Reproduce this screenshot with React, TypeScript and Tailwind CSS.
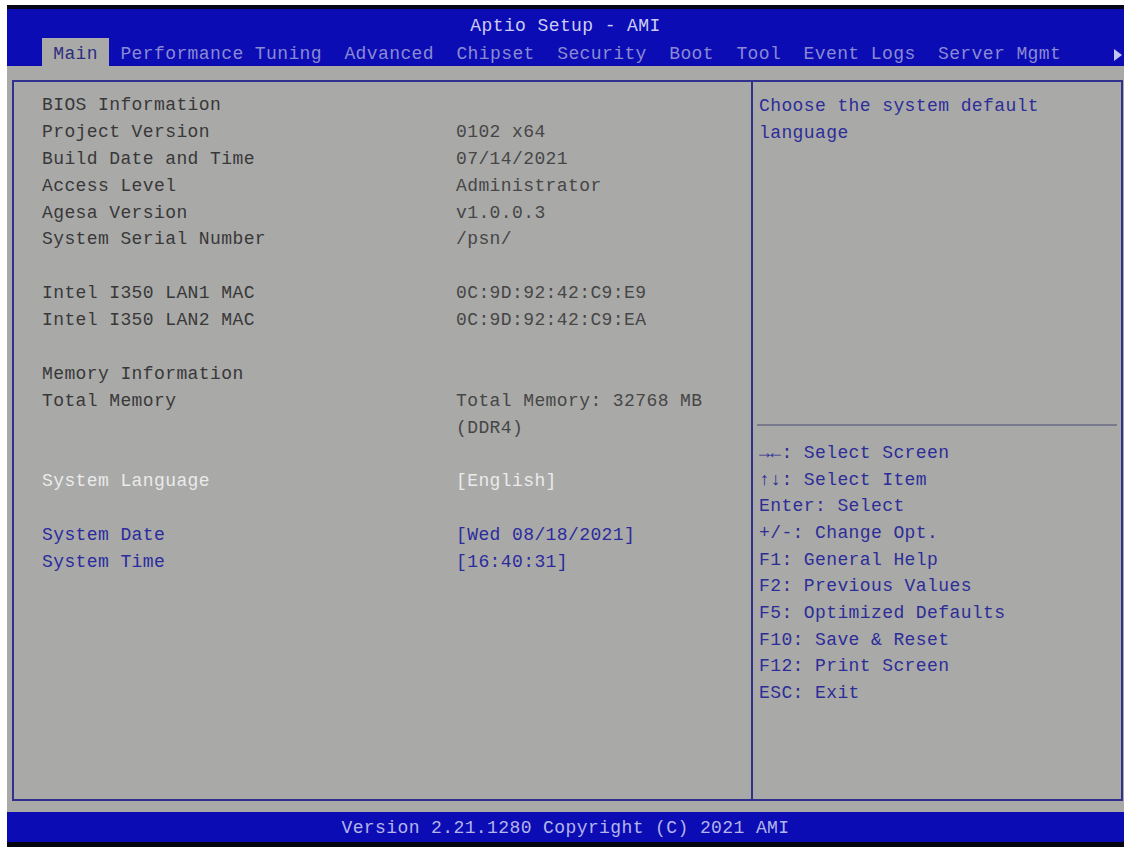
const tabs = [
  "Main",
  "Performance Tuning",
  "Advanced",
  "Chipset",
  "Security",
  "Boot",
  "Tool",
  "Event Logs",
  "Server Mgmt",
];

type Row = { label?: string; value?: string; tone?: "text" | "sel" | "link" };

const rows: Row[] = [
  { label: "BIOS Information" },
  { label: "Project Version", value: "0102 x64" },
  { label: "Build Date and Time", value: "07/14/2021" },
  { label: "Access Level", value: "Administrator" },
  { label: "Agesa Version", value: "v1.0.0.3" },
  { label: "System Serial Number", value: "/psn/" },
  {},
  { label: "Intel I350 LAN1 MAC", value: "0C:9D:92:42:C9:E9" },
  { label: "Intel I350 LAN2 MAC", value: "0C:9D:92:42:C9:EA" },
  {},
  { label: "Memory Information" },
  { label: "Total Memory", value: "Total Memory: 32768 MB" },
  { value: "(DDR4)" },
  {},
  { label: "System Language", value: "[English]", tone: "sel" },
  {},
  { label: "System Date", value: "[Wed 08/18/2021]", tone: "link" },
  { label: "System Time", value: "[16:40:31]", tone: "link" },
];

const help = [
  "→←: Select Screen",
  "↑↓: Select Item",
  "Enter: Select",
  "+/-: Change Opt.",
  "F1: General Help",
  "F2: Previous Values",
  "F5: Optimized Defaults",
  "F10: Save & Reset",
  "F12: Print Screen",
  "ESC: Exit",
];

function toneClass(tone: Row["tone"]) {
  if (tone === "sel") return "text-[#ebebeb]";
  if (tone === "link") return "text-[#2b2b9e]";
  return "text-[#383838]";
}

export default function App() {
  return (
    <div className="h-[853px] w-[1129px] bg-white pl-[7px] pt-[5px] font-['Liberation_Mono',monospace] text-[18px] tracking-[0.4px]">
      <div className="flex h-[842px] w-[1117px] flex-col bg-[#a9a9a8]">
        <header className="border-t-4 border-[#07071c] bg-[#0c0cb4]">
          <div className="flex h-[29px] justify-center pt-[5px] leading-[24px] text-[#ccccf4]">
            Aptio Setup - AMI
          </div>
          <nav className="flex h-[28px] items-stretch pl-[35px] pr-[2px]">
            {tabs.map((t, i) => (
              <span
                key={t}
                className={`flex items-center whitespace-pre px-[11.2px] pt-[5px] ${
                  i === 0 ? "bg-[#a9a9a8] text-[#2e2e80]" : "text-[#8a8ad2]"
                }`}
              >
                {t}
              </span>
            ))}
            <span className="ml-auto flex items-center pt-[5px]">
              <svg width="8" height="12" viewBox="0 0 8 12">
                <path d="M0 0 L8 6 L0 12 Z" fill="#c4c4f0" />
              </svg>
            </span>
          </nav>
        </header>

        <main className="mb-[11px] ml-[5px] mr-[1px] mt-[14px] flex flex-1 border-2 border-[#30308f]">
          <section className="w-[739px] border-r-2 border-[#30308f] pl-[28px] pt-[10px]">
            {rows.map((r, i) => (
              <div key={i} className={`flex h-[26.9px] items-center whitespace-pre ${toneClass(r.tone)}`}>
                <span className="w-[414px]">{r.label ?? ""}</span>
                <span className={r.tone ? "" : "text-[#464646]"}>{r.value ?? ""}</span>
              </div>
            ))}
          </section>

          <aside className="flex flex-1 flex-col">
            <div className="h-[342px] pl-[6px] pt-[11px] text-[#2d2d98]">
              <div className="flex h-[26.9px] items-center whitespace-pre">Choose the system default</div>
              <div className="flex h-[26.9px] items-center whitespace-pre">language</div>
            </div>
            <div className="mx-[4px] h-[2px] bg-[#7a7a8e]" />
            <div className="pl-[6px] pt-[14px] text-[#2d2d98]">
              {help.map((h) => (
                <div key={h} className="flex h-[26.7px] items-center whitespace-pre">
                  {h}
                </div>
              ))}
            </div>
          </aside>
        </main>

        <footer className="flex h-[35px] items-center justify-center border-b-[5px] border-[#05050f] bg-[#0c0cb4] pt-[2px] text-[#b4b4ea]">
          Version 2.21.1280 Copyright (C) 2021 AMI
        </footer>
      </div>
    </div>
  );
}
